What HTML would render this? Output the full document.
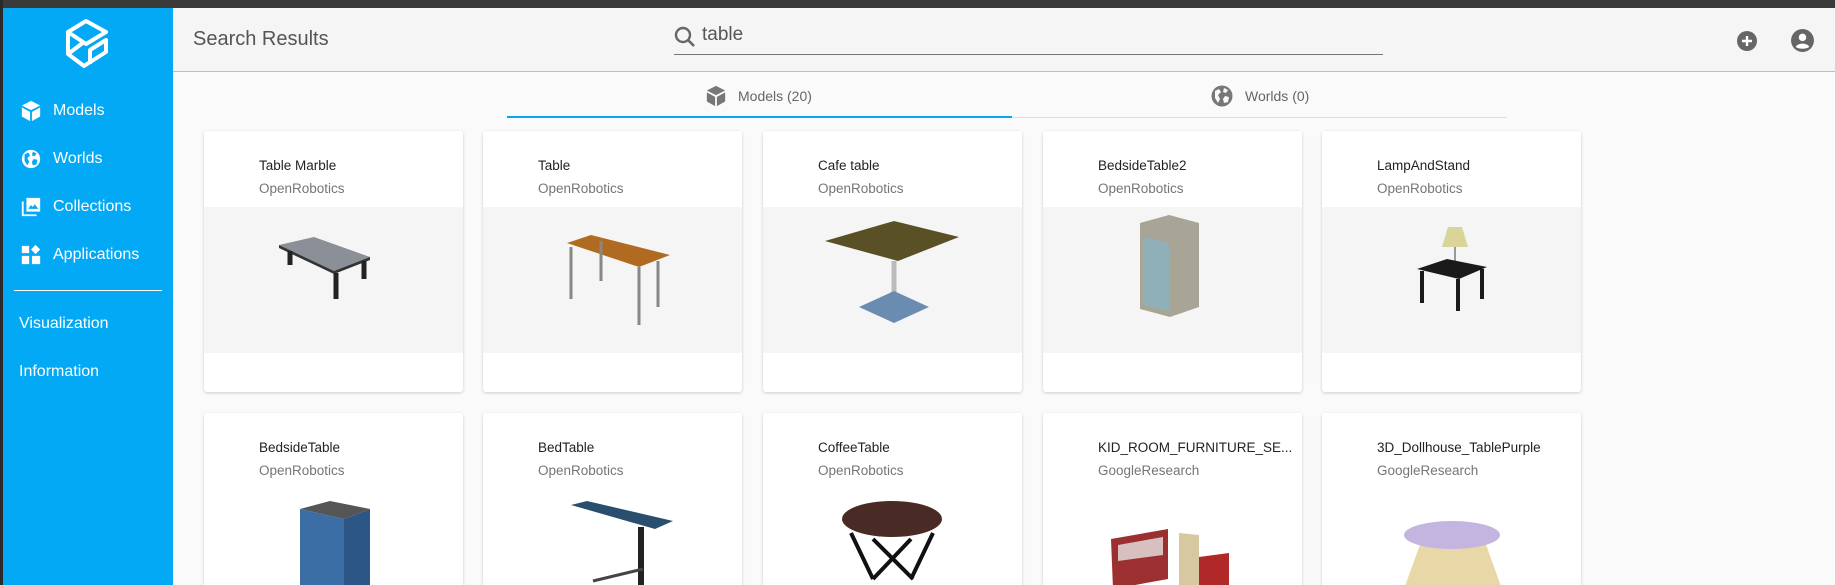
<!DOCTYPE html>
<html style="width:1835px;height:585px;overflow:hidden"><head><meta charset="utf-8"><style>
*{margin:0;padding:0;box-sizing:border-box}
body{width:1835px;height:585px;overflow:hidden;background:#fafafa;font-family:"Liberation Sans",sans-serif;position:relative}
.a{position:absolute}
.nav{position:absolute;left:20px;color:#fff;font-size:16px;display:flex;align-items:center}
.nav svg{width:22px;height:22px;margin-right:11px}
.card{position:absolute;width:259px;background:#fff;border-radius:3px;box-shadow:0 1px 3px rgba(0,0,0,.18);overflow:hidden}
.r2{height:172px;border-radius:3px 3px 0 0}
.t{position:absolute;left:55px;top:27px;font-size:13.5px;color:#222;white-space:nowrap}
.s{position:absolute;left:55px;top:50px;font-size:13.5px;color:#757575}
.img{position:absolute;left:0;right:0;top:76px;height:146px;background:#f5f5f5}
.img svg{position:absolute;left:0;top:0}
</style></head><body>
<div class="a" style="left:0;top:0;width:1835px;height:8px;background:#3a3a3a"></div>
<div class="a" style="left:0;top:0;width:3px;height:585px;background:#2a2a2a"></div>
<div class="a" style="left:3px;top:8px;width:170px;height:577px;background:#03a9f4"></div>
<svg class="a" style="left:64px;top:18px" width="48" height="52" viewBox="0 0 48 52"><g fill="none" stroke="#fff" stroke-width="4" stroke-linejoin="round"><path d="M4 14 L22 3 L42 14 L22 26 Z M4 14 V36 L20 48 L42 34 V22 L26 32 V46"/><path d="M4 36 L20 24"/></g></svg>
<div class="nav" style="top:100px"><svg viewBox="0 0 24 24"><path fill="#fff" d="M12 1 L22 6 L12 11 L2 6Z M2 8 L11 13 V23 L2 18Z M13 13 L22 8 V18 L13 23Z"/></svg>Models</div>
<div class="nav" style="top:148px"><svg viewBox="0 0 24 24"><circle cx="12" cy="12" r="10" fill="#fff"/><path fill="#03a9f4" d="M5 7 L9 5 L11 8 L8 11 L10 15 L8 19 L5 14Z M14 4 L18 6 L16 9 L13 8Z M15 12 L19 13 L18 18 L14 19 L13 15Z"/></svg>Worlds</div>
<div class="nav" style="top:196px"><svg viewBox="0 0 24 24"><path fill="#fff" d="M7 2 H22 V17 H7Z M2 6 H4 V20 H18 V22 H2Z"/><path fill="#03a9f4" d="M9 14 L12 10 L14 12 L16 9 L20 14Z"/></svg>Collections</div>
<div class="nav" style="top:244px"><svg viewBox="0 0 24 24"><path fill="#fff" d="M2 2 H10 V10 H2Z M2 13 H10 V22 H2Z M13 13 H22 V22 H13Z M17 1 L22 6 L17 11 L12 6Z"/></svg>Applications</div>
<div class="a" style="left:14px;top:290px;width:148px;height:1px;background:#fff"></div>
<div class="a" style="left:19px;top:315px;color:#fff;font-size:16px">Visualization</div>
<div class="a" style="left:19px;top:363px;color:#fff;font-size:16px">Information</div>

<div class="a" style="left:173px;top:8px;width:1662px;height:64px;background:#f5f5f5;border-bottom:1px solid #bdbdbd"></div>
<div class="a" style="left:193px;top:28px;font-size:20px;color:#555">Search Results</div>
<svg class="a" style="left:673px;top:25px" width="24" height="24" viewBox="0 0 24 24"><circle cx="10" cy="10" r="7" fill="none" stroke="#666" stroke-width="2.4"/><path d="M15 15 L21 21" stroke="#666" stroke-width="2.6"/></svg>
<div class="a" style="left:702px;top:24px;font-size:19px;color:#555">table</div>
<div class="a" style="left:674px;top:54px;width:709px;height:1px;background:#777"></div>
<svg class="a" style="left:1736px;top:30px" width="22" height="22" viewBox="0 0 22 22"><circle cx="11" cy="11" r="10" fill="#666"/><path d="M11 6 V16 M6 11 H16" stroke="#fff" stroke-width="2.4"/></svg>
<svg class="a" style="left:1790px;top:28px" width="25" height="25" viewBox="0 0 24 24"><circle cx="12" cy="12" r="11" fill="#666"/><circle cx="12" cy="9" r="3.6" fill="#fff"/><path d="M5.5 18 C8 14 16 14 18.5 18 C16 20.5 8 20.5 5.5 18Z" fill="#fff"/></svg>

<svg class="a" style="left:705px;top:84px" width="22" height="24" viewBox="0 0 24 24"><path fill="#777" d="M12 1 L22 6 L12 11 L2 6Z M2 8 L11 13 V23 L2 18Z M13 13 L22 8 V18 L13 23Z"/></svg>
<div class="a" style="left:738px;top:88px;font-size:14px;color:#666">Models (20)</div>
<svg class="a" style="left:1210px;top:84px" width="24" height="24" viewBox="0 0 24 24"><circle cx="12" cy="12" r="10.5" fill="#777"/><path fill="#fafafa" d="M5 7 L9 5 L11 8 L8 11 L10 15 L8 19 L5 14Z M14 4 L18 6 L16 9 L13 8Z M15 12 L19 13 L18 18 L14 19 L13 15Z"/></svg>
<div class="a" style="left:1245px;top:88px;font-size:14px;color:#666">Worlds (0)</div>
<div class="a" style="left:507px;top:116px;width:505px;height:2px;background:#03a9f4"></div>
<div class="a" style="left:1012px;top:117px;width:495px;height:1px;background:#ddd"></div>

<!-- row 1 -->
<div class="card" style="left:204px;top:131px;height:261px"><div class="t">Table Marble</div><div class="s">OpenRobotics</div><div class="img"><svg width="259" height="146"><path d="M75 38 L110 30 L166 50 L130 64Z" fill="#8a8f98"/><path d="M75 38 L130 64 L166 50 L166 53 L130 67 L75 41Z" fill="#333"/><path d="M86 44 V58 M132 66 V92 M160 54 V72" stroke="#222" stroke-width="5"/></svg></div></div>
<div class="card" style="left:483px;top:131px;height:261px"><div class="t">Table</div><div class="s">OpenRobotics</div><div class="img"><svg width="259" height="146"><path d="M84 36 L108 28 L187 48 L156 60Z" fill="#b06a22"/><path d="M88 40 V92 M156 60 V118 M175 54 V100 M118 34 V74" stroke="#888" stroke-width="3"/></svg></div></div>
<div class="card" style="left:763px;top:131px;height:261px"><div class="t">Cafe table</div><div class="s">OpenRobotics</div><div class="img"><svg width="259" height="146"><path d="M62 34 L131 14 L196 30 L135 54Z" fill="#5a5025"/><path d="M131 54 V90" stroke="#bbb" stroke-width="5"/><path d="M96 100 L131 84 L166 100 L131 116Z" fill="#6a8cb0"/></svg></div></div>
<div class="card" style="left:1043px;top:131px;height:261px"><div class="t">BedsideTable2</div><div class="s">OpenRobotics</div><div class="img"><svg width="259" height="146"><path d="M97 16 L126 8 L156 16 L156 100 L127 110 L97 102Z" fill="#a8a496"/><path d="M100 30 L126 36 V104 L100 98Z" fill="#8fb0b8"/></svg></div></div>
<div class="card" style="left:1322px;top:131px;height:261px"><div class="t">LampAndStand</div><div class="s">OpenRobotics</div><div class="img"><svg width="259" height="146"><path d="M126 20 L140 20 L146 40 L120 40Z" fill="#d8d49a"/><path d="M133 40 V56" stroke="#999" stroke-width="2"/><path d="M95 62 L125 52 L165 60 L137 72Z" fill="#1a1a1a"/><path d="M100 64 V96 M136 72 V104 M160 62 V92" stroke="#1a1a1a" stroke-width="4"/></svg></div></div>

<!-- row 2 -->
<div class="card r2" style="left:204px;top:413px"><div class="t">BedsideTable</div><div class="s">OpenRobotics</div><div class="img" style="background:#fff;height:96px"><svg width="259" height="96"><path d="M96 20 L126 12 L166 20 L140 30Z" fill="#555"/><path d="M96 20 L140 30 V110 L96 100Z" fill="#3a6ea5"/><path d="M140 30 L166 20 V100 L140 110Z" fill="#2c5686"/></svg></div></div>
<div class="card r2" style="left:483px;top:413px"><div class="t">BedTable</div><div class="s">OpenRobotics</div><div class="img" style="background:#fff;height:96px"><svg width="259" height="96"><path d="M88 16 L104 12 L190 32 L172 40Z" fill="#2a4e6e"/><path d="M158 38 V100" stroke="#222" stroke-width="6"/><path d="M110 92 L160 80" stroke="#444" stroke-width="3"/></svg></div></div>
<div class="card r2" style="left:763px;top:413px"><div class="t">CoffeeTable</div><div class="s">OpenRobotics</div><div class="img" style="background:#fff;height:96px"><svg width="259" height="96"><ellipse cx="129" cy="30" rx="50" ry="18" fill="#4a2a24"/><path d="M88 44 L110 90 M170 44 L148 90 M110 50 L150 90 M148 50 L110 90" stroke="#111" stroke-width="4"/></svg></div></div>
<div class="card r2" style="left:1043px;top:413px"><div class="t">KID_ROOM_FURNITURE_SE...</div><div class="s">GoogleResearch</div><div class="img" style="background:#fff;height:96px"><svg width="259" height="96"><path d="M68 50 L125 40 V90 L70 100Z" fill="#9c3030"/><path d="M75 56 L120 48 V66 L75 72Z" fill="#d8c0c0"/><path d="M136 44 L156 46 V100 L136 98Z" fill="#d8c8a0"/><path d="M156 68 L186 64 V100 L156 100Z" fill="#b02828"/></svg></div></div>
<div class="card r2" style="left:1322px;top:413px"><div class="t">3D_Dollhouse_TablePurple</div><div class="s">GoogleResearch</div><div class="img" style="background:#fff;height:96px"><svg width="259" height="96"><path d="M100 50 L162 50 L180 100 L82 100Z" fill="#e8d8a8"/><ellipse cx="130" cy="46" rx="48" ry="14" fill="#c4b4e0"/></svg></div></div>
</body></html>
